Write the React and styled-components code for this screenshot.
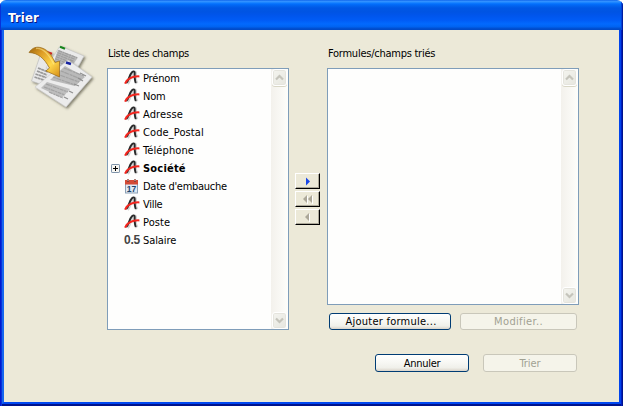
import React from "react";
import styled, { createGlobalStyle, css } from "styled-components";

const Global = createGlobalStyle`
  * { box-sizing: border-box; }
  html, body { margin: 0; padding: 0; background: #fff; overflow: hidden; }
  body { font: 11px/18px "DejaVu Sans Condensed", "DejaVu Sans", sans-serif; font-stretch: condensed; color: #000; }
`;

const Window = styled.div`
  width: 623px;
  height: 406px;
  display: flex;
  flex-direction: column;
  overflow: hidden;
  border-radius: 6px 6px 0 0;
  background: #ece9d8;
`;

const TitleBar = styled.header`
  height: 30px;
  flex: none;
  display: flex;
  align-items: center;
  padding: 6px 8px 0;
  color: #fff;
  font: bold 13px/20px "DejaVu Sans Condensed", "DejaVu Sans", sans-serif;
  text-shadow: 1px 1px 0 #0a1883;
  background: linear-gradient(180deg, #0058e6 0, #3a93ff 1px, #288eff 2px, #127dff 3px, #036ffc 4px, #0262ee 6px, #0057e5 8px, #0054e3 12px, #0055eb 15px, #005bf5 20px, #026afe 24px, #0062ef 27px, #0052d6 28px, #0048c4 30px);
  box-shadow: inset 1px 0 #0831d9, inset -1px 0 #001ea0, inset -2px 0 #0441d8;
`;

const Title = styled.span`
  letter-spacing: 0.2px;
`;

const Frame = styled.div`
  flex: 1;
  display: flex;
  padding: 0 2px 2px;
  background: linear-gradient(90deg, #0019cf 0 1px, #0831d9 1px 2px, #00138c 2px calc(100% - 2px), #001dc0 calc(100% - 2px) calc(100% - 1px), #00138c calc(100% - 1px));
`;

const Body = styled.main`
  flex: 1;
  display: flex;
  flex-direction: column;
  padding: 14px 40px 0 20px;
  border: 0 solid;
  border-width: 0 2px 2px;
  border-color: #0050f0 #0044ec #0048f1 #1666ee;
  background: #ece9d8;
`;

const Columns = styled.div`
  display: flex;
  align-items: flex-start;
  height: 286px;
`;

const Art = styled.div`
  width: 83px;
  height: 70px;
  flex: none;
`;

const Column = styled.section`
  width: ${(p) => p.$width}px;
  flex: none;
  display: flex;
  flex-direction: column;
`;

const Label = styled.label`
  height: 24px;
  padding: 1px 0 0 1px;
  white-space: nowrap;
  letter-spacing: ${(p) => p.$track}px;
`;

const ListBox = styled.div`
  height: ${(p) => p.$height}px;
  display: flex;
  justify-content: space-between;
  border: 1px solid #7f9db9;
  background: #fefefd;
`;

const Items = styled.ul`
  margin: 0;
  padding: 0 0 0 3px;
  list-style: none;
`;

const Item = styled.li`
  height: 18px;
  display: grid;
  grid-template-columns: 12px 20px auto;
  align-items: center;
`;

const ItemText = styled.span`
  padding-top: 2px;
  line-height: 16px;
  height: 18px;
  white-space: nowrap;
  font-weight: ${(p) => (p.$bold ? "bold" : "normal")};
  letter-spacing: ${(p) => p.$track}px;
`;

const IconCell = styled.span`
  height: 18px;
  display: flex;
  align-items: center;
`;

const ScrollTrack = styled.div`
  width: 17px;
  display: flex;
  flex-direction: column;
  justify-content: space-between;
  padding: 0 1px;
  background: linear-gradient(90deg, #f3f1ec, #fefefb);
`;

const ScrollButton = styled.div`
  width: 15px;
  height: 17px;
  display: flex;
  align-items: center;
  justify-content: center;
  border: 1px solid #fff;
  border-radius: 3px;
  background: linear-gradient(135deg, #f4f4ef, #e6e6df);
  box-shadow: inset 0 0 0 1px #e5e4dd, ${(p) => (p.$last ? "0 0 0 #fff" : "0 1px 0 #d9d7c6")};
`;

const Movers = styled.div`
  width: 38px;
  flex: none;
  display: flex;
  flex-direction: column;
  gap: 2px;
  padding: 129px 0 0 6px;
`;

const MoveButton = styled.button`
  width: 25px;
  height: 16px;
  padding: 0;
  display: flex;
  align-items: center;
  justify-content: center;
  background: #ece9d8;
  border: 1px solid;
  border-color: #fff #000 #000 #fff;
  box-shadow: inset -1px -1px #aca899;
`;

const ButtonRow = styled.div`
  display: flex;
  gap: ${(p) => p.$gap}px;
  padding: ${(p) => p.$pad};
`;

const enabled = css`
  color: #000;
  border: 1px solid #003c74;
  background: linear-gradient(180deg, #fff 0, #f7f7f3 50%, #f0f0ea 80%, #d9d3c9 100%);
`;

const disabled = css`
  color: #a1a192;
  border: 1px solid #c9c7ba;
  background: #f5f4ea;
`;

const Button = styled.button`
  width: ${(p) => p.$width}px;
  height: ${(p) => p.$height}px;
  flex: none;
  padding: 1px 0 0;
  padding-left: ${(p) => p.$nudge || 0}px;
  display: flex;
  align-items: center;
  justify-content: center;
  border-radius: 3px;
  font: inherit;
  line-height: 14px;
  letter-spacing: ${(p) => p.$track}px;
  ${(p) => (p.disabled ? disabled : enabled)}
`;

const LetterIcon = () => (
  <svg width="18" height="16" viewBox="0 0 18 16" fill="none">
    <path d="M4.500 13.500C7 11 7 5 10.500 2.500c2.500-1.500 2 1 1.800 3-.2 3 .2 6 1.700 8" stroke="#999" strokeWidth="3.200" opacity=".4" />
    <path d="M3.200 13C6 11 6 5 9 2.200c1.200-1.100 2.700-1.200 2.700.6-.2 3.500-.2 7 1.100 10.200" stroke="#2b2b2b" strokeWidth="1.900" />
    <path d="M2 13.600C4.500 8.800 9 6 16.400 6.400" stroke="#f5261e" strokeWidth="2" />
  </svg>
);

const CalendarIcon = () => (
  <svg width="17" height="16" viewBox="0 0 17 16">
    <rect x="2.500" y="3.500" width="12" height="11.500" fill="#dfe9f4" stroke="#8ba0b6" />
    <rect x="2" y="2" width="13" height="4.500" fill="#d34a35" />
    <path d="M5 1v3M12 1v3" stroke="#8d4038" strokeWidth="2" />
    <path d="M5 1v2M12 1v2" stroke="#e8d9d5" strokeWidth=".8" />
    <text x="8.500" y="13.800" textAnchor="middle" fontFamily="Liberation Sans, sans-serif" fontWeight="bold" fontSize="8.500" fill="#1d456d">17</text>
  </svg>
);

const NumberIcon = styled.span`
  padding-left: 1px;
  font: bold 12px/16px "Liberation Sans", sans-serif;
  letter-spacing: -0.2px;
  color: #444;
`;

const ExpandIcon = () => (
  <svg width="9" height="9" viewBox="0 0 9 9">
    <rect x=".5" y=".5" width="8" height="8" rx=".6" fill="#f7f6f2" stroke="#7f94aa" />
    <path d="M2 4.500h5M4.500 2v5" stroke="#000" />
  </svg>
);

const Chevron = ({ down }) => (
  <svg width="9" height="7" viewBox="0 0 9 7" fill="none">
    <path d={down ? "M1 1.500l3.500 3.500L8 1.500" : "M1 5.500L4.500 2 8 5.500"} stroke="#c5c4bb" strokeWidth="2.200" />
  </svg>
);

const Scrollbar = () => (
  <ScrollTrack>
    <ScrollButton><Chevron /></ScrollButton>
    <ScrollButton $last><Chevron down /></ScrollButton>
  </ScrollTrack>
);

const linesOf = (n, x, y, w, step) =>
  Array.from({ length: n }, (_, i) => `M${x} ${y + i * step}h${w - ((i * 5) % 4)}`).join("");

const DocumentsIcon = () => (
  <svg width="72" height="70" viewBox="0 0 72 70">
    <defs>
      <linearGradient id="gold" x1="0" y1="0" x2="1" y2="1">
        <stop offset="0" stopColor="#9c640c" />
        <stop offset=".3" stopColor="#dd9c25" />
        <stop offset=".65" stopColor="#ffd84c" />
        <stop offset="1" stopColor="#d68d16" />
      </linearGradient>
      <filter id="soft" x="-20%" y="-20%" width="150%" height="150%">
        <feDropShadow dx="1.500" dy="1.500" stdDeviation="1.200" floodColor="#55523f" floodOpacity=".7" />
      </filter>
    </defs>
    <g filter="url(#soft)">
      <path d="M16 12L34 18 25 43 7.500 37z" fill="#e9e9e9" stroke="#bbb" strokeWidth=".6" />
      <path d="M14 24l10 4M13 27l10 4M11.500 30l12 4M10.500 33l12 4" stroke="#999" strokeWidth="1.700" strokeDasharray="3 .4" />
      <path d="M23 8l5 1.800" stroke="#d02020" strokeWidth="2" />
    </g>
    <g filter="url(#soft)">
      <path d="M36 2L60 12 50 30 22 24z" fill="#eaeaea" stroke="#c4c4c4" strokeWidth=".6" />
      <path d="M34 6L54 13.500 48 22 29 20z" fill="#bababa" />
      <g transform="translate(35 2) rotate(21)">
        <path d={linesOf(7, 1, 4.5, 20, 2.2)} stroke="#a0a0a0" strokeWidth="1.400" strokeDasharray="4 .6 2 .5" />
      </g>
      <path d="M36 2.800l5 1.900" stroke="#17851d" strokeWidth="2.200" />
    </g>
    <g filter="url(#soft)">
      <path d="M44 16L68 33 42 63 11 43z" fill="#ececec" stroke="#c9c9c9" strokeWidth=".6" />
      <path d="M41 22L61 33 51 42 26 36z" fill="#b9b9b9" />
      <path d="M23 38L46 45 38 54 17 44z" fill="#bebebe" />
      <path d="M24 36.500L49 44" stroke="#ececec" strokeWidth="1.500" />
      <path d="M40 24l20 8M37 27l20 8M33 30l22 8M29 33l22 8" stroke="#a2a2a2" strokeWidth="1.200" strokeDasharray="3 .6 5 .8" />
      <path d="M22 40l22 8M20 43l21 8M25 48l14 6" stroke="#a2a2a2" strokeWidth="1.200" strokeDasharray="4 .7 2 .6" />
      <path d="M56 29l6 3M54 34l5 3M50 40l5 2M45 47l4 2M40 53l4 2" stroke="#8f8f8f" strokeWidth="1.200" />
      <path d="M42 18.500l5 1.500" stroke="#1724a0" strokeWidth="2.400" />
    </g>
    <path d="M5 8.500C8 4 12 2 18 4 25 6.500 28 12 31 18.500L35.500 17 35.500 33 22 27 25.500 24C20 14 14 9 5 8.500z" fill="url(#gold)" stroke="#966716" strokeWidth=".7" />
    <path d="M12 4.500c8-1 14 8 18 16" fill="none" stroke="#fff0a0" strokeOpacity=".5" strokeWidth="1.300" />
  </svg>
);

const MoveIcon = ({ kind }) => (
  <svg width="12" height="9" viewBox="0 0 12 9">
    {kind === "add" && <path d="M4 .5v8l4-4z" fill="#1746e8" />}
    {kind === "clear" && (
      <>
        <path d="M5.500 1v8M10.500 1v8" stroke="#fff" />
        <path d="M5 0v8L1 4zM10 0v8L6 4z" fill="#aca899" />
      </>
    )}
    {kind === "remove" && (
      <>
        <path d="M7.500 1v8" stroke="#fff" />
        <path d="M7 0v8L3 4z" fill="#aca899" />
      </>
    )}
  </svg>
);

const fields = [
  { name: "Prénom", track: -0.15 },
  { name: "Nom", track: -0.2 },
  { name: "Adresse", track: 0.1 },
  { name: "Code_Postal", track: 0.1 },
  { name: "Téléphone", track: 0.1 },
  { name: "Société", track: 0.2, bold: true, expandable: true },
  { name: "Date d'embauche", track: -0.28, icon: "date" },
  { name: "Ville", track: -0.3 },
  { name: "Poste", track: 0.1 },
  { name: "Salaire", track: -0.1, icon: "number" },
];

const FieldIcon = ({ type }) => {
  if (type === "date") return <CalendarIcon />;
  if (type === "number") return <NumberIcon>0.5</NumberIcon>;
  return <LetterIcon />;
};

export default function App() {
  return (
    <>
      <Global />
      <Window>
        <TitleBar><Title>Trier</Title></TitleBar>
        <Frame>
          <Body>
            <Columns>
              <Art><DocumentsIcon /></Art>
              <Column $width={182}>
                <Label $track={-0.32}>Liste des champs</Label>
                <ListBox $height={262}>
                  <Items>
                    {fields.map((f) => (
                      <Item key={f.name}>
                        <IconCell>{f.expandable && <ExpandIcon />}</IconCell>
                        <IconCell><FieldIcon type={f.icon} /></IconCell>
                        <ItemText $bold={f.bold} $track={f.track}>{f.name}</ItemText>
                      </Item>
                    ))}
                  </Items>
                  <Scrollbar />
                </ListBox>
              </Column>
              <Movers>
                <MoveButton><MoveIcon kind="add" /></MoveButton>
                <MoveButton disabled><MoveIcon kind="clear" /></MoveButton>
                <MoveButton disabled><MoveIcon kind="remove" /></MoveButton>
              </Movers>
              <Column $width={252}>
                <Label $track={-0.25}>Formules/champs triés</Label>
                <ListBox $height={237}>
                  <Items />
                  <Scrollbar />
                </ListBox>
                <ButtonRow $gap={9} $pad="8px 0 0 2px">
                  <Button $width={122} $height={17} $track={0.25} $nudge={2}>Ajouter formule...</Button>
                  <Button $width={117} $height={17} $track={0.35} disabled>Modifier..</Button>
                </ButtonRow>
              </Column>
            </Columns>
            <ButtonRow $gap={14} $pad="24px 0 0 351px">
              <Button $width={94} $height={18} $track={-0.25}>Annuler</Button>
              <Button $width={94} $height={18} $track={-0.1} disabled>Trier</Button>
            </ButtonRow>
          </Body>
        </Frame>
      </Window>
    </>
  );
}
